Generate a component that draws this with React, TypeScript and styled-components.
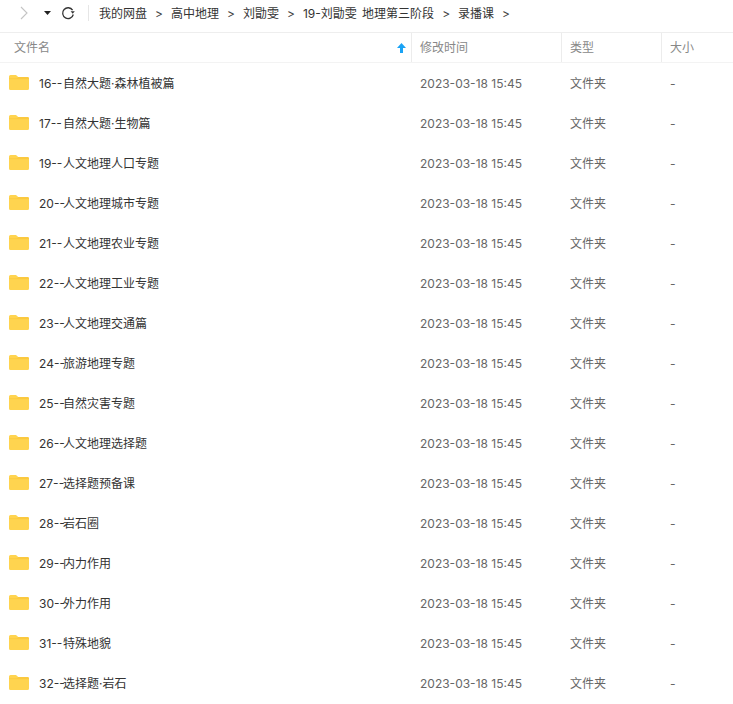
import React from 'react';
import styled, { createGlobalStyle } from 'styled-components';

const GlobalStyle = createGlobalStyle`
  html, body {
    margin: 0;
    padding: 0;
    background: #fff;
    overflow: hidden;
  }
  body {
    font-family: Inter, "Noto Sans CJK SC", sans-serif;
    line-height: 16px;
  }
`;

const Page = styled.div`
  width: 733px;
  height: 704px;
  overflow: hidden;
  background: #fff;
`;

const Toolbar = styled.div`
  display: flex;
  align-items: center;
  height: 26px;
  padding: 0 0 6px 20px;
  border-bottom: 1px solid #eeeeee;
  box-sizing: content-box;
`;

const ToolIcon = styled.svg<{ $gap: number }>`
  display: block;
  margin-right: ${(p) => p.$gap}px;
  flex: none;
`;

const Divider = styled.div`
  width: 1px;
  height: 16px;
  background: #e6e6e6;
  margin-right: 10px;
`;

const Crumbs = styled.div`
  display: flex;
  align-items: center;
  padding-top: 2px;
  font-size: 12px;
  color: #333;
  word-spacing: 2px;
`;

const Crumb = styled.span`
  white-space: pre;
`;

const Sep = styled.span`
  margin: 0 8px;
  color: #444;
`;

const HeaderRow = styled.div`
  display: grid;
  grid-template-columns: 411px 150px 100px 72px;
  height: 29px;
  border-bottom: 1px solid #f3f3f3;
`;

const HeaderCell = styled.div<{ $first?: boolean }>`
  display: flex;
  align-items: center;
  justify-content: space-between;
  box-sizing: border-box;
  padding: 0 5px 0 ${(p) => (p.$first ? 14 : 8)}px;
  font-size: 12px;
  color: #888;
  border-left: ${(p) => (p.$first ? '0' : '1px solid #ececec')};
`;

const Row = styled.div`
  display: grid;
  grid-template-columns: 411px 150px 100px 72px;
  box-sizing: border-box;
  height: 40px;
  padding-top: 2px;
  align-items: center;
  font-size: 12px;
  color: #666;
`;

const NameCell = styled.div`
  display: flex;
  align-items: center;
  padding-left: 9px;
  color: #333;
`;

const FolderIcon = styled.svg`
  display: block;
  margin: 0 10px 3px 0;
  flex: none;
`;

const Prefix = styled.span`
  display: inline-block;
  width: 24px;
  white-space: pre;
`;

const Cell = styled.div`
  padding-left: 9px;
`;

const Folder = () => (
  <FolderIcon width="20" height="15" viewBox="0 0 20 15">
    <path d="M1.5 0H7l2.2 2H18.5A1.5 1.5 0 0 1 20 3.5V13.5A1.5 1.5 0 0 1 18.5 15H1.5A1.5 1.5 0 0 1 0 13.5V1.5A1.5 1.5 0 0 1 1.5 0Z" fill="#ffd44f" />
    <path d="M0 4.2H20V3.5A1.5 1.5 0 0 0 18.5 2H9.2L8 3.2H0Z" fill="#fbc93f" />
  </FolderIcon>
);

const rows = [
  ['16--', '自然大题·森林植被篇'],
  ['17--', '自然大题·生物篇'],
  ['19--', '人文地理人口专题'],
  ['20--', '人文地理城市专题'],
  ['21--', '人文地理农业专题'],
  ['22--', '人文地理工业专题'],
  ['23--', '人文地理交通篇'],
  ['24--', '旅游地理专题'],
  ['25--', '自然灾害专题'],
  ['26--', '人文地理选择题'],
  ['27--', '选择题预备课'],
  ['28--', '岩石圈'],
  ['29--', '内力作用'],
  ['30--', '外力作用'],
  ['31--', '特殊地貌'],
  ['32--', '选择题·岩石'],
];

const crumbs = ['我的网盘', '高中地理', '刘勖雯', '19-刘勖雯 地理第三阶段', '录播课'];

export default function App() {
  return (
    <Page>
      <GlobalStyle />
      <Toolbar>
        <ToolIcon $gap={15} width="9" height="14" viewBox="0 0 9 14">
          <path d="M1 1l6 6-6 6" fill="none" stroke="#c4c4c4" strokeWidth="1.1" />
        </ToolIcon>
        <ToolIcon $gap={10} width="7" height="4" viewBox="0 0 7 4">
          <path d="M0 0h7L3.5 4Z" fill="#222" />
        </ToolIcon>
        <ToolIcon $gap={13} width="14" height="14" viewBox="0 0 14 14">
          <path d="M11.6 4.2A5.4 5.4 0 1 0 12.3 8.5" fill="none" stroke="#333" strokeWidth="1.3" />
          <path d="M9.6 5.2h4.2L11.7 7.8Z" fill="#333" />
        </ToolIcon>
        <Divider />
        <Crumbs>
          {crumbs.map((c) => (
            <React.Fragment key={c}>
              <Crumb>{c}</Crumb>
              <Sep>&gt;</Sep>
            </React.Fragment>
          ))}
        </Crumbs>
      </Toolbar>
      <HeaderRow>
        <HeaderCell $first>
          文件名
          <svg width="9" height="10" viewBox="0 0 9 10">
            <path d="M4.5 0L9 5H6v5H3V5H0Z" fill="#1aa3f5" />
          </svg>
        </HeaderCell>
        <HeaderCell>修改时间</HeaderCell>
        <HeaderCell>类型</HeaderCell>
        <HeaderCell>大小</HeaderCell>
      </HeaderRow>
      {rows.map(([num, name]) => (
        <Row key={num}>
          <NameCell>
            <Folder />
            <Prefix>{num}</Prefix>
            {name}
          </NameCell>
          <Cell>2023-03-18 15:45</Cell>
          <Cell>文件夹</Cell>
          <Cell>-</Cell>
        </Row>
      ))}
    </Page>
  );
}
